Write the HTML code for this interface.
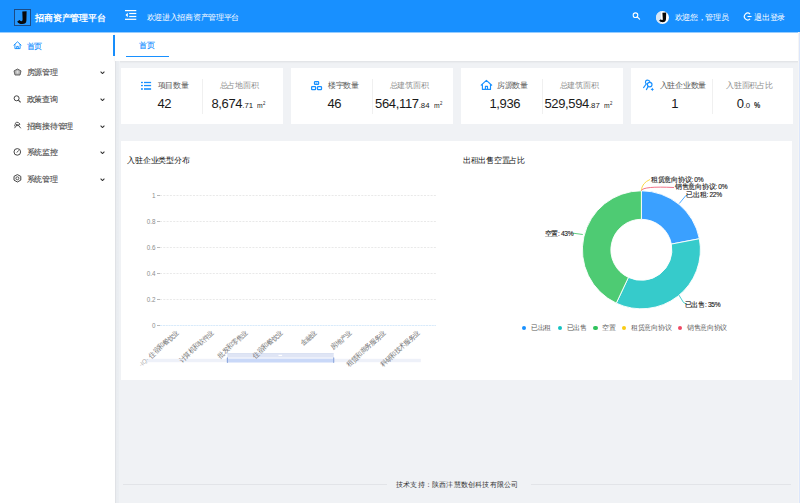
<!DOCTYPE html>
<html><head><meta charset="utf-8">
<style>
*{margin:0;padding:0;box-sizing:border-box}
html,body{width:800px;height:503px;overflow:hidden;background:#f0f2f5;font-family:"Liberation Sans",sans-serif;}
.a{position:absolute;white-space:nowrap}
#hd{position:absolute;left:0;top:0;width:800px;height:32px;background:#1890ff}
#sb{position:absolute;left:0;top:32px;width:115px;height:471px;background:#fff;border-right:0}
#sbs{position:absolute;left:115px;top:61px;width:4.5px;height:442px;background:linear-gradient(90deg,#e0e2e6 0,#e0e2e6 1px,#e9ecf0 1.2px,#ebeef2 3.5px,#f0f2f5 4.5px)}
.t{line-height:10px;height:10px}
.mi{position:absolute;left:26.5px;font-size:7.78px;color:#4a4a4a;-webkit-text-stroke:0.12px #4a4a4a;line-height:10px;letter-spacing:-0.25px;white-space:nowrap}
.chev{position:absolute;left:100px;width:4px;height:4px}
#tabs{position:absolute;left:115px;top:32px;width:685px;height:29px;background:#fff;box-shadow:0 1px 2px rgba(0,0,0,.08)}
.card{position:absolute;top:67.9px;width:161.7px;height:56px;background:#fff}
.lbl{position:absolute;font-size:7.78px;line-height:10px;top:80.7px;color:#595959;letter-spacing:-0.25px;white-space:nowrap}
.lbl2{position:absolute;font-size:7.78px;line-height:10px;top:80.7px;color:#8c8c8c;letter-spacing:-0.25px;white-space:nowrap}
.num{position:absolute;font-size:13px;line-height:14px;top:97.1px;color:#1a1a1a;letter-spacing:-0.35px;white-space:nowrap}
.num small{font-size:7.8px;letter-spacing:0}
.num .u{font-size:8px;letter-spacing:0;display:inline-block;transform:scaleX(0.85);transform-origin:0 0;margin-left:1px}
.num sup{font-size:5px;vertical-align:0;position:relative;top:-3px;margin-left:0.3px}
.div{position:absolute;top:79px;width:1px;height:35px;background:#f0f0f0}
</style></head><body>

<div id="hd"></div>
<div class="a" style="left:13.6px;top:9px;width:17px;height:16.8px;border:1px solid #1c4b85;background:#2397ff"></div>
<svg class="a" style="left:10px;top:5px" width="25" height="25" viewBox="0 0 25 25"><path d="M12.3 6.6 L16.6 6.2 L16.4 15.8 Q16.2 19 12.3 19 Q8.6 19 7.2 16.4 L9.6 14.9 Q10.6 16.3 11.9 16.1 Q12.6 15.9 12.6 14.2 Z" fill="#0a0a0a"/></svg>
<div class="a" style="left:35px;top:12.9px;font-size:8.9px;line-height:10px;color:#fff;font-weight:bold;letter-spacing:-0.13px">招商资产管理平台</div>
<svg class="a" style="left:125px;top:9px" width="12" height="12" viewBox="0 0 12 12"><g fill="#fff"><rect x="0" y="1" width="11.3" height="1.2"/><rect x="4.2" y="3.9" width="7.1" height="1.2"/><rect x="4.2" y="6.9" width="7.1" height="1.2"/><rect x="0" y="9.7" width="11.3" height="1.2"/><path d="M0.5 6 L2.8 3.7 L2.8 8.3Z"/></g></svg>
<div class="a" style="left:146.6px;top:12.8px;font-size:7.73px;line-height:10px;color:#fff;letter-spacing:-0.29px">欢迎进入招商资产管理平台</div>
<svg class="a" style="left:632px;top:12.4px" width="9" height="9" viewBox="0 0 9 9"><circle cx="3.5" cy="3.2" r="2.3" fill="none" stroke="#fff" stroke-width="1.1"/><path d="M5.2 4.9 L7.6 7.1" stroke="#fff" stroke-width="1.2" stroke-linecap="round"/></svg>
<div class="a" style="left:655.9px;top:11.1px;width:13.2px;height:13.2px;border-radius:50%;background:#fff;overflow:hidden"><div style="position:absolute;left:0;top:0;width:5px;height:13.2px;background:#d6e6f6"></div></div><svg class="a" style="left:655.9px;top:11.1px" width="13.2" height="13.2" viewBox="0 0 13.2 13.2"><path d="M6.4 1.8 L10.2 1.6 L10 8.2 Q9.8 11.2 6.6 11.2 Q4 11.2 3.1 9.4 L5 8.2 Q5.6 9.2 6.4 9.1 Q6.8 9 6.8 7.8 Z" fill="#0a0a0a"/></svg>
<div class="a" style="left:674.5px;top:13px;font-size:7.75px;line-height:10px;color:#fff;letter-spacing:-0.29px">欢迎您，管理员</div>
<svg class="a" style="left:743px;top:12px" width="10" height="9" viewBox="0 0 10 9"><path d="M7.1 2.1 A3.35 3.35 0 1 0 7.1 6.9" fill="none" stroke="#fff" stroke-width="1.15"/><path d="M4.5 4.5 H8.6" stroke="#fff" stroke-width="1.1"/></svg>
<div class="a" style="left:754.2px;top:13px;font-size:7.8px;line-height:10px;color:#fff;letter-spacing:-0.25px">退出登录</div>

<div id="sb"></div>
<div class="a" style="left:113px;top:34.8px;width:2px;height:21.4px;background:#1890ff"></div>
<svg class="a" style="left:12.5px;top:41.3px" width="9" height="9" viewBox="0 0 9 9"><path d="M0.9 4.1 L4.5 0.8 L8.1 4.1 M1.9 3.4 V7.6 H7.1 V3.4 M3.7 7.6 V5.4 H5.3 V7.6" fill="none" stroke="#1890ff" stroke-width="0.95" stroke-linejoin="round" stroke-linecap="round"/></svg>
<div class="a" style="left:26.5px;top:41.6px;font-size:7.78px;line-height:10px;color:#1890ff;letter-spacing:-0.25px;-webkit-text-stroke:0.15px #1890ff">首页</div>
<svg class="a" style="left:12.5px;top:68.3px" width="9" height="8" viewBox="0 0 9 8"><path d="M4.5 1 L8 2.9 L7 7 H2 L1 2.9 Z" fill="#b3b3b3" stroke="#555" stroke-width="0.9" stroke-linejoin="round"/><path d="M4.5 2.6 L5.6 3.4 L5.2 5.5 H3.8 L3.4 3.4 Z" fill="#ddd"/></svg>
<div class="mi" style="top:68.3px">房源管理</div>
<svg class="a" style="left:12.8px;top:94.6px" width="9" height="8" viewBox="0 0 9 8"><circle cx="3.6" cy="3.3" r="2.5" fill="none" stroke="#444" stroke-width="1"/><path d="M5.4 5.1 L7.6 7.3" stroke="#444" stroke-width="1.1"/></svg>
<div class="mi" style="top:95.4px">政策查询</div>
<svg class="a" style="left:13px;top:121.3px" width="9" height="8" viewBox="0 0 9 8"><path d="M2.2 2.3 Q3.6 0.6 5.4 1.5 L7 3.2 L5.2 4 L3 3.3 Z M3.6 4.3 L1.5 7.2 M5.6 4.3 L7.8 7.3 M3 4.6 H6 M2.2 3.2 L1.5 5.3" fill="none" stroke="#444" stroke-width="0.9"/></svg>
<div class="mi" style="top:122px">招商接待管理</div>
<svg class="a" style="left:13px;top:147.6px" width="9" height="8" viewBox="0 0 9 8"><circle cx="4.3" cy="3.9" r="3.3" fill="none" stroke="#444" stroke-width="1"/><path d="M2.6 5.3 H6" stroke="#fff" stroke-width="1.2"/><path d="M3.8 4.6 L5.6 2.4" stroke="#444" stroke-width="0.9"/></svg>
<div class="mi" style="top:148.3px">系统监控</div>
<svg class="a" style="left:12.8px;top:173.8px" width="9" height="9" viewBox="0 0 9 9"><path d="M4.4 0.6 L7.8 2.4 V6.1 L4.4 8 L1 6.1 V2.4 Z" fill="none" stroke="#444" stroke-width="1"/><circle cx="4.4" cy="4.3" r="1.5" fill="none" stroke="#444" stroke-width="0.9"/></svg>
<div class="mi" style="top:174.8px">系统管理</div>
<svg class="a" style="left:99.5px;top:70.6px" width="5" height="3.6" viewBox="0 0 5 3.6"><path d="M0.6 0.7 L2.5 2.6 L4.4 0.7" fill="none" stroke="#333" stroke-width="1.05"/></svg>
<svg class="a" style="left:99.5px;top:97.8px" width="5" height="3.6" viewBox="0 0 5 3.6"><path d="M0.6 0.7 L2.5 2.6 L4.4 0.7" fill="none" stroke="#333" stroke-width="1.05"/></svg>
<svg class="a" style="left:99.5px;top:124.5px" width="5" height="3.6" viewBox="0 0 5 3.6"><path d="M0.6 0.7 L2.5 2.6 L4.4 0.7" fill="none" stroke="#333" stroke-width="1.05"/></svg>
<svg class="a" style="left:99.5px;top:150.8px" width="5" height="3.6" viewBox="0 0 5 3.6"><path d="M0.6 0.7 L2.5 2.6 L4.4 0.7" fill="none" stroke="#333" stroke-width="1.05"/></svg>
<svg class="a" style="left:99.5px;top:177.5px" width="5" height="3.6" viewBox="0 0 5 3.6"><path d="M0.6 0.7 L2.5 2.6 L4.4 0.7" fill="none" stroke="#333" stroke-width="1.05"/></svg>

<div id="tabs"></div>
<div id="sbs"></div>
<div class="a" style="left:139.3px;top:40.9px;font-size:7.78px;line-height:10px;color:#1890ff;letter-spacing:-0.25px;-webkit-text-stroke:0.15px #1890ff">首页</div>
<div class="a" style="left:126px;top:55.5px;width:42.5px;height:1.4px;background:#1890ff"></div>

<!-- cards -->
<div class="card" style="left:121.2px"></div>
<div class="card" style="left:291.2px"></div>
<div class="card" style="left:461.2px"></div>
<div class="card" style="left:631.2px"></div>
<svg class="a" style="left:138px;top:78px" width="16" height="16" viewBox="0 0 16 16"><g fill="#1890ff"><rect x="3" y="3.85" width="1.9" height="1.3"/><rect x="6" y="3.85" width="7.1" height="1.3"/><rect x="3" y="6.9" width="1.9" height="1.3"/><rect x="6" y="6.9" width="7.1" height="1.3"/><rect x="3" y="10.2" width="1.9" height="1.6"/><rect x="6" y="10.2" width="7.1" height="1.6"/></g></svg>
<div class="lbl" style="left:157.6px">项目数量</div>
<div class="div" style="left:201.6px"></div>
<div class="lbl2" style="left:219.7px">总占地面积</div>
<div class="num" style="left:124.3px;width:80px;text-align:center">42</div>
<div class="num" style="left:189.3px;width:100px;text-align:center">8,674<small>.71</small> <span class="u">m<sup>2</sup></span></div>
<svg class="a" style="left:308px;top:78px" width="16" height="16" viewBox="0 0 16 16"><g fill="none" stroke="#1890ff" stroke-width="1.25"><rect x="6.5" y="3.6" width="4.1" height="2.7" rx="0.6"/><rect x="3.6" y="8.6" width="4" height="3" rx="0.6"/><rect x="9.5" y="8.6" width="4" height="3" rx="0.6"/></g><path d="M7.6 5.6 L8.6 4.6 L9.6 5.6Z" fill="#1890ff"/></svg>
<div class="lbl" style="left:327.9px">楼宇数量</div>
<div class="div" style="left:371.8px"></div>
<div class="lbl2" style="left:389.6px">总建筑面积</div>
<div class="num" style="left:294.3px;width:80px;text-align:center">46</div>
<div class="num" style="left:359.3px;width:100px;text-align:center">564,117<small>.84</small> <span class="u">m<sup>2</sup></span></div>
<svg class="a" style="left:478px;top:77px" width="16" height="16" viewBox="0 0 16 16"><path d="M3.2 8.2 L8.4 3.4 L13.7 8.2 M4.4 7.4 V12.4 H12.5 V7.4 M7.4 12.4 V9.4 H9.5 V12.4" fill="none" stroke="#1890ff" stroke-width="1.15" stroke-linejoin="round" stroke-linecap="round"/></svg>
<div class="lbl" style="left:496.8px">房源数量</div>
<div class="div" style="left:541.9px"></div>
<div class="lbl2" style="left:559.7px">总建筑面积</div>
<div class="num" style="left:464.8px;width:80px;text-align:center">1,936</div>
<div class="num" style="left:529.1px;width:100px;text-align:center">529,594<small>.87</small> <span class="u">m<sup>2</sup></span></div>
<svg class="a" style="left:640px;top:77px" width="16" height="16" viewBox="0 0 16 16"><g fill="none" stroke="#1890ff" stroke-width="1.15" stroke-linecap="round"><path d="M6.2 6.8 Q5 5.6 5.6 4.2 Q6.5 2.9 8.2 3.2 Q9.3 3.5 9.8 4.6"/><circle cx="9.7" cy="7.6" r="2.3"/><path d="M6.2 7 L3.6 10.6 M8.2 9.4 L6.4 12.6"/></g><path d="M12.3 10.6 L12.9 11.8 L14.1 12.4 L12.9 13 L12.3 14.2 L11.7 13 L10.5 12.4 L11.7 11.8Z" fill="#1890ff"/></svg>
<div class="lbl" style="left:659.6px">入驻企业数量</div>
<div class="div" style="left:712.1px"></div>
<div class="lbl2" style="left:726.2px">入驻面积占比</div>
<div class="num" style="left:634.8px;width:80px;text-align:center">1</div>
<div class="num" style="left:699.5px;width:100px;text-align:center">0<small>.0</small> <span style="font-size:9px;font-weight:bold;letter-spacing:0;display:inline-block;transform:scaleX(0.78);transform-origin:0 100%;margin-left:0.8px">%</span></div>
<!-- chart card -->
<div class="a" style="left:121.3px;top:140.5px;width:671px;height:239.5px;background:#fff"></div>
<div class="a" style="left:127.3px;top:156px;font-size:7.78px;line-height:10px;color:#111;letter-spacing:-0.25px">入驻企业类型分布</div>
<div class="a" style="left:462.8px;top:156px;font-size:7.78px;line-height:10px;color:#111;letter-spacing:-0.25px">出租出售空置占比</div>
<svg class="a" style="left:121px;top:180px" width="330" height="195" viewBox="121 180 330 195"><line x1="160" y1="195.50" x2="436" y2="195.50" stroke="#e3e3e3" stroke-width="0.8" stroke-dasharray="2 1.3"/><line x1="157" y1="195.50" x2="160" y2="195.50" stroke="#a6a6a6" stroke-width="0.8"/><text x="155.6" y="197.70" text-anchor="end" font-family="Liberation Sans" font-size="6.3" fill="#8c8c8c">1</text><line x1="160" y1="221.50" x2="436" y2="221.50" stroke="#e3e3e3" stroke-width="0.8" stroke-dasharray="2 1.3"/><line x1="157" y1="221.50" x2="160" y2="221.50" stroke="#a6a6a6" stroke-width="0.8"/><text x="155.6" y="223.70" text-anchor="end" font-family="Liberation Sans" font-size="6.3" fill="#8c8c8c">0.8</text><line x1="160" y1="247.50" x2="436" y2="247.50" stroke="#e3e3e3" stroke-width="0.8" stroke-dasharray="2 1.3"/><line x1="157" y1="247.50" x2="160" y2="247.50" stroke="#a6a6a6" stroke-width="0.8"/><text x="155.6" y="249.70" text-anchor="end" font-family="Liberation Sans" font-size="6.3" fill="#8c8c8c">0.6</text><line x1="160" y1="273.50" x2="436" y2="273.50" stroke="#e3e3e3" stroke-width="0.8" stroke-dasharray="2 1.3"/><line x1="157" y1="273.50" x2="160" y2="273.50" stroke="#a6a6a6" stroke-width="0.8"/><text x="155.6" y="275.70" text-anchor="end" font-family="Liberation Sans" font-size="6.3" fill="#8c8c8c">0.4</text><line x1="160" y1="299.50" x2="436" y2="299.50" stroke="#e3e3e3" stroke-width="0.8" stroke-dasharray="2 1.3"/><line x1="157" y1="299.50" x2="160" y2="299.50" stroke="#a6a6a6" stroke-width="0.8"/><text x="155.6" y="301.70" text-anchor="end" font-family="Liberation Sans" font-size="6.3" fill="#8c8c8c">0.2</text><line x1="160" y1="325.50" x2="436" y2="325.50" stroke="#d9ebfb" stroke-width="1" stroke-dasharray="2.2 0.6"/><line x1="157" y1="325.50" x2="160" y2="325.50" stroke="#a6a6a6" stroke-width="0.8"/><text x="155.6" y="327.70" text-anchor="end" font-family="Liberation Sans" font-size="6.3" fill="#8c8c8c">0</text><rect x="146.5" y="358.8" width="274.3" height="3.4" fill="#eef1f9"/><rect x="227.3" y="353.3" width="106.4" height="4.3" fill="#dfe5f5"/><line x1="227.3" y1="353.5" x2="333.7" y2="353.5" stroke="#cdd5ec" stroke-width="0.5"/><rect x="278.5" y="354.8" width="3.6" height="1.2" fill="#fff"/><rect x="227.3" y="358.6" width="106.4" height="3.9" fill="#c9d8f8"/><rect x="226.8" y="357.3" width="1.2" height="5.6" rx="0.6" fill="#90a9dd"/><rect x="333.1" y="357.3" width="1.2" height="5.6" rx="0.6" fill="#90a9dd"/></svg>
<div class="a" style="left:95.25px;top:328.60px;width:80px;text-align:right;font-size:6.9px;line-height:7px;color:#737373;letter-spacing:-0.75px;transform-origin:100% 0;transform:rotate(-42deg)">住宿和餐饮业</div>
<div class="a" style="left:129.70px;top:328.60px;width:80px;text-align:right;font-size:6.9px;line-height:7px;color:#737373;letter-spacing:-0.75px;transform-origin:100% 0;transform:rotate(-42deg)">计算机和软件业</div>
<div class="a" style="left:164.15px;top:328.60px;width:80px;text-align:right;font-size:6.9px;line-height:7px;color:#737373;letter-spacing:-0.75px;transform-origin:100% 0;transform:rotate(-42deg)">批发和零售业</div>
<div class="a" style="left:198.60px;top:328.60px;width:80px;text-align:right;font-size:6.9px;line-height:7px;color:#737373;letter-spacing:-0.75px;transform-origin:100% 0;transform:rotate(-42deg)">住宿和餐饮业</div>
<div class="a" style="left:233.05px;top:328.60px;width:80px;text-align:right;font-size:6.9px;line-height:7px;color:#737373;letter-spacing:-0.75px;transform-origin:100% 0;transform:rotate(-42deg)">金融业</div>
<div class="a" style="left:267.50px;top:328.60px;width:80px;text-align:right;font-size:6.9px;line-height:7px;color:#737373;letter-spacing:-0.75px;transform-origin:100% 0;transform:rotate(-42deg)">房地产业</div>
<div class="a" style="left:301.95px;top:328.60px;width:80px;text-align:right;font-size:6.9px;line-height:7px;color:#737373;letter-spacing:-0.75px;transform-origin:100% 0;transform:rotate(-42deg)">租赁和商务服务业</div>
<div class="a" style="left:336.40px;top:328.60px;width:80px;text-align:right;font-size:6.9px;line-height:7px;color:#737373;letter-spacing:-0.75px;transform-origin:100% 0;transform:rotate(-42deg)">科研和技术服务业</div>
<div class="a" style="left:138.5px;top:358.5px;font-size:6px;line-height:7px;color:#aaa;transform:rotate(-42deg)">-IQ-</div>
<svg class="a" style="left:440px;top:170px" width="350" height="170" viewBox="440 170 350 170"><path d="M641.40 190.80 A59.00 59.00 0 0 1 699.35 238.74 L671.36 244.08 A30.50 30.50 0 0 0 641.40 219.30 Z" fill="#3aa0ff" stroke="#fff" stroke-width="0.9" stroke-linejoin="round"/><path d="M699.35 238.74 A59.00 59.00 0 0 1 616.28 303.18 L628.41 277.40 A30.50 30.50 0 0 0 671.36 244.08 Z" fill="#36cbcb" stroke="#fff" stroke-width="0.9" stroke-linejoin="round"/><path d="M616.28 303.18 A59.00 59.00 0 0 1 641.40 190.80 L641.40 219.30 A30.50 30.50 0 0 0 628.41 277.40 Z" fill="#4ecb73" stroke="#fff" stroke-width="0.9" stroke-linejoin="round"/><polyline points="679.3,203.5 685.8,195.6 687,195.6" fill="none" stroke="#3aa0ff" stroke-width="0.9"/><polyline points="677,292 683.5,302.5 686,303.8" fill="none" stroke="#36cbcb" stroke-width="0.9"/><polyline points="582.8,234.5 574,233.3 572.5,233.3" fill="none" stroke="#4ecb73" stroke-width="0.9"/><path d="M641.4 190.6 Q641.8 183 650 179.5" fill="none" stroke="#fbd437" stroke-width="0.9"/><path d="M641.4 190.6 Q643 186 674 187.5" fill="none" stroke="#f2637b" stroke-width="0.9"/></svg>
<div class="a" style="left:651.0px;top:175.5px;font-size:6.6px;line-height:8px;color:#1a1a1a;letter-spacing:-0.3px;-webkit-text-stroke:0.12px #1a1a1a">租赁意向协议: 0%</div>
<div class="a" style="left:675.0px;top:183.3px;font-size:6.6px;line-height:8px;color:#1a1a1a;letter-spacing:-0.3px;-webkit-text-stroke:0.12px #1a1a1a">销售意向协议: 0%</div>
<div class="a" style="left:686.3px;top:191.4px;font-size:6.6px;line-height:8px;color:#1a1a1a;letter-spacing:-0.3px;-webkit-text-stroke:0.12px #1a1a1a">已出租: 22%</div>
<div class="a" style="left:684.8px;top:300.8px;font-size:6.6px;line-height:8px;color:#1a1a1a;letter-spacing:-0.3px;-webkit-text-stroke:0.12px #1a1a1a">已出售: 35%</div>
<div class="a" style="left:544.5px;top:229.5px;font-size:6.6px;line-height:8px;color:#1a1a1a;letter-spacing:-0.3px;-webkit-text-stroke:0.12px #1a1a1a">空置: 43%</div>
<div class="a" style="left:521.8px;top:325.6px;width:4.6px;height:4.6px;border-radius:50%;background:#1890ff"></div>
<div class="a" style="left:531.0px;top:323.9px;font-size:6.6px;line-height:8px;color:#595959;letter-spacing:-0.3px">已出租</div>
<div class="a" style="left:557.5px;top:325.6px;width:4.6px;height:4.6px;border-radius:50%;background:#13c2c2"></div>
<div class="a" style="left:566.7px;top:323.9px;font-size:6.6px;line-height:8px;color:#595959;letter-spacing:-0.3px">已出售</div>
<div class="a" style="left:593.0px;top:325.6px;width:4.6px;height:4.6px;border-radius:50%;background:#2fc25b"></div>
<div class="a" style="left:602.2px;top:323.9px;font-size:6.6px;line-height:8px;color:#595959;letter-spacing:-0.3px">空置</div>
<div class="a" style="left:621.9px;top:325.6px;width:4.6px;height:4.6px;border-radius:50%;background:#facc14"></div>
<div class="a" style="left:631.1px;top:323.9px;font-size:6.6px;line-height:8px;color:#595959;letter-spacing:-0.3px">租赁意向协议</div>
<div class="a" style="left:677.7px;top:325.6px;width:4.6px;height:4.6px;border-radius:50%;background:#f04864"></div>
<div class="a" style="left:686.9px;top:323.9px;font-size:6.6px;line-height:8px;color:#595959;letter-spacing:-0.3px">销售意向协议</div>
<div class="a" style="left:123.4px;top:483.8px;width:264px;height:1px;background:#e2e4e8"></div>
<div class="a" style="left:531px;top:483.8px;width:260px;height:1px;background:#e2e4e8"></div>
<div class="a" style="left:396px;top:479.8px;font-size:7.2px;line-height:9px;color:#333;letter-spacing:0.2px">技术支持：陕西沣慧数创科技有限公司</div>
<div class="a" style="left:0;top:32px;width:800px;height:1px;background:rgba(24,144,255,.45)"></div>
<div class="a" style="left:797.7px;top:32px;width:1.5px;height:471px;background:#f5f5f5"></div>
<div class="a" style="left:799px;top:32px;width:1px;height:471px;background:#dbe6fb"></div>
</body></html>
